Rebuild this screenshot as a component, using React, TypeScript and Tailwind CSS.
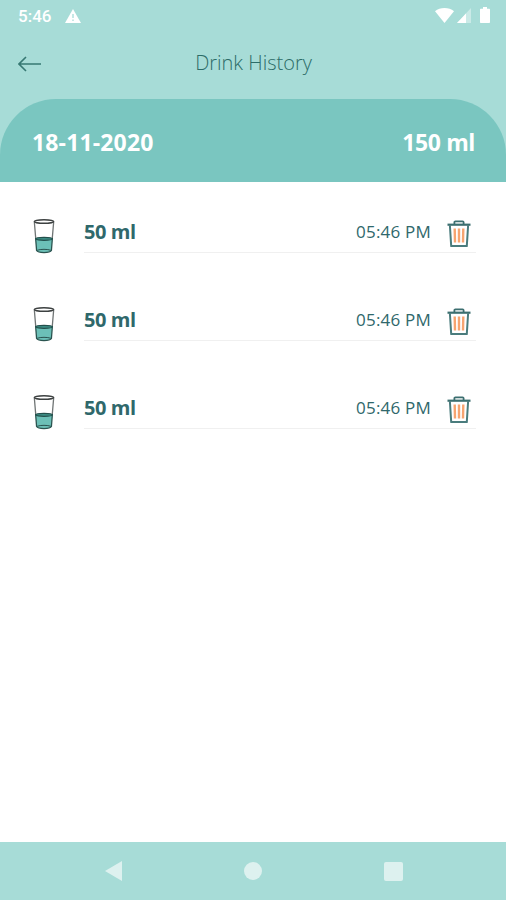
import React from 'react';

interface Drink {
  id: number;
  amount: string;
  time: string;
}

const drinks: Drink[] = [
  { id: 1, amount: '50 ml', time: '05:46 PM' },
  { id: 2, amount: '50 ml', time: '05:46 PM' },
  { id: 3, amount: '50 ml', time: '05:46 PM' },
];

function GlassIcon() {
  return (
    <svg className="h-9 w-6 shrink-0" viewBox="0 0 24 36" fill="none">
      <path d="M3.500 20 4.600 32.500c1.500 2.700 13.300 2.700 14.800 0L20.500 20Z" fill="#6cc0b7" />
      <path d="M2.300 3.500 3.700 20M21.700 3.500 20.300 20" stroke="#6f7474" strokeWidth="1.300" />
      <path d="M3.600 20 4.600 32.500c1.500 2.700 13.300 2.700 14.800 0l1-12.500" stroke="#2b5450" strokeWidth="1.300" />
      <ellipse cx="12" cy="3.500" rx="9.600" ry="1.800" stroke="#3d4141" strokeWidth="1.500" />
      <ellipse cx="12" cy="20.800" rx="8.200" ry="1.500" fill="#3d8f86" stroke="#23504c" strokeWidth="1.200" />
      <path d="M5.200 32.300c3-1.300 10.600-1.300 13.600 0" stroke="#2b5450" strokeWidth="1" />
    </svg>
  );
}

function TrashIcon() {
  return (
    <svg className="h-7 w-6 shrink-0" viewBox="0 0 24 28" fill="none">
      <path d="M7.400 4V2.300c0-.6.400-1 1-1h7.200c.6 0 1 .4 1 1V4" stroke="#3c6f70" strokeWidth="1.800" />
      <path d="M2.900 5.500 4.200 26.100h15.600L21.100 5.500" stroke="#4a7c7d" strokeWidth="2" strokeLinejoin="round" />
      <path d="M.5 4.700h23" stroke="#3c6f70" strokeWidth="2.200" />
      <path d="M7.700 8.500 8 22.500M12 8.500v14M16.300 8.500l-.3 14" stroke="#f7a470" strokeWidth="2.400" />
    </svg>
  );
}

function StatusBar() {
  return (
    <div className="flex h-8 items-center justify-between pr-4 pl-[18px] text-white">
      <div className="flex items-center gap-[14px]">
        <span className="font-[Roboto,sans-serif] text-[17px] leading-8 font-medium">5:46</span>
        <svg className="h-[14px] w-4" viewBox="0 0 16 14">
          <path d="M8 0 16 14H0Z" fill="currentColor" />
          <path d="M8 5v4M8 10.500v1.500" stroke="#a7dcd7" strokeWidth="1.300" />
        </svg>
      </div>
      <div className="flex items-center pb-[2px]">
        <svg className="h-[15px] w-[19px]" viewBox="0 0 19 15" fill="currentColor">
          <path d="M9.500 15 0 3.200C5-1 14-1 19 3.200Z" />
        </svg>
        <svg className="ml-[3px] h-[15px] w-[14px]" viewBox="0 0 14 15" fill="currentColor">
          <path d="M14 0v15H0Z" opacity=".4" />
          <path d="M9 5.400V15H0Z" />
        </svg>
        <svg className="ml-[9px] h-4 w-[10px]" viewBox="0 0 10 16" fill="currentColor">
          <path d="M3 0h4v1.700h2c.6 0 1 .4 1 1V15c0 .6-.4 1-1 1H1c-.6 0-1-.4-1-1V2.700c0-.6.400-1 1-1h2Z" />
        </svg>
      </div>
    </div>
  );
}

function DrinkRow({ drink }: { drink: Drink }) {
  return (
    <li className="flex h-[88px] items-start pr-[30px] pl-8">
      <div className="pt-[18px]">
        <GlassIcon />
      </div>
      <div className="ml-7 flex h-[53px] flex-1 items-center justify-between border-b border-[#f0f0f0] pt-[11px] pr-[5px] text-[#2f686b]">
        <span className="text-[20px] leading-6 font-bold tracking-[-0.4px]">{drink.amount}</span>
        <div className="flex items-center">
          <span className="text-[17px] leading-6 tracking-[0.2px]">{drink.time}</span>
          <span className="ml-4 pt-1">
            <TrashIcon />
          </span>
        </div>
      </div>
    </li>
  );
}

export default function App() {
  return (
    <div className="flex h-[900px] w-[506px] flex-col bg-white font-['Open_Sans','Noto_Sans',sans-serif]">
      <header className="bg-[#a7dcd7]">
        <StatusBar />
        <div className="grid h-[67px] grid-cols-[1fr_auto_1fr] items-center pb-1 pl-[18px] pr-[17px]">
          <svg className="h-4 w-[23px]" viewBox="0 0 23 16" fill="none" stroke="#377873" strokeWidth="1.600">
            <path d="M8 1 1 8l7 7M1 8h22" />
          </svg>
          <h1 className="pb-px text-[20px] font-light text-[#2c6c68]">Drink History</h1>
        </div>
        <div className="flex h-[83px] items-center justify-between rounded-t-[56px] bg-[#7ac6c0] pt-[3px] pr-[31px] pl-8 text-[23px] font-bold text-white">
          <span className="tracking-[0.15px]">18-11-2020</span>
          <span className="tracking-[-0.4px]">150 ml</span>
        </div>
      </header>
      <ul className="flex-1 pt-[18px]">
        {drinks.map((drink) => (
          <DrinkRow key={drink.id} drink={drink} />
        ))}
      </ul>
      <nav className="grid h-[58px] grid-cols-3 items-center bg-[#a7dcd7] px-[43px] text-[#ddf1ef]">
        <svg className="h-5 w-[17px] justify-self-center" viewBox="0 0 17 20" fill="currentColor">
          <path d="M17 0v20L0 10Z" />
        </svg>
        <span className="size-[18px] justify-self-center rounded-full bg-current" />
        <span className="size-[19px] justify-self-center rounded-[2px] bg-current" />
      </nav>
    </div>
  );
}
